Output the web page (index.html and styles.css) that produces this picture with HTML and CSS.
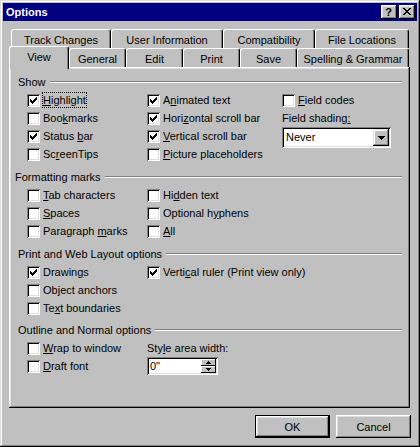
FILE: index.html
```html
<!DOCTYPE html>
<html>
<head>
<meta charset="utf-8">
<title>Options</title>
<link rel="stylesheet" href="styles.css">
</head>
<body>
<div class="window">
  <div class="titlebar">
    <span class="title">Options</span>
    <div class="tb-buttons">
      <div class="tb-btn help">?</div>
      <div class="tb-btn">
        <svg width="8" height="7" viewBox="0 0 8 7"><path fill="#000" d="M0 0h2v1H0zM6 0h2v1H6zM1 1h2v1H1zM5 1h2v1H5zM2 2h4v1H2zM3 3h2v1H3zM2 4h4v1H2zM1 5h2v1H1zM5 5h2v1H5zM0 6h2v1H0zM6 6h2v1H6z"/></svg>
      </div>
    </div>
  </div>

  <div class="dialog">
    <div class="tabs">
      <div class="tabrow">
        <div class="tab t-track">Track Changes</div>
        <div class="tab t-user">User Information</div>
        <div class="tab t-compat">Compatibility</div>
        <div class="tab t-files">File Locations</div>
      </div>
      <div class="tabrow">
        <div class="tab t-view active">View</div>
        <div class="tab t-small">General</div>
        <div class="tab t-small">Edit</div>
        <div class="tab t-small">Print</div>
        <div class="tab t-small">Save</div>
        <div class="tab t-spell">Spelling &amp; Grammar</div>
      </div>
    </div>

    <div class="panel">
      <section class="group">
        <div class="group-head"><span>Show</span><span class="rule"></span></div>
        <div class="grid">
          <label class="cb"><span class="box"><svg width="7" height="7" viewBox="0 0 7 7"><path d="M0 2h1v3H0zM1 3h1v3H1zM2 4h1v3H2zM3 3h1v3H3zM4 2h1v3H4zM5 1h1v3H5zM6 0h1v3H6z"/></svg></span><span class="txt focus"><u>H</u>ighlight</span></label>
          <label class="cb"><span class="box"><svg width="7" height="7" viewBox="0 0 7 7"><path d="M0 2h1v3H0zM1 3h1v3H1zM2 4h1v3H2zM3 3h1v3H3zM4 2h1v3H4zM5 1h1v3H5zM6 0h1v3H6z"/></svg></span><span class="txt">A<u>n</u>imated text</span></label>
          <label class="cb"><span class="box"></span><span class="txt"><u>F</u>ield codes</span></label>

          <label class="cb"><span class="box"></span><span class="txt">Boo<u>k</u>marks</span></label>
          <label class="cb"><span class="box"><svg width="7" height="7" viewBox="0 0 7 7"><path d="M0 2h1v3H0zM1 3h1v3H1zM2 4h1v3H2zM3 3h1v3H3zM4 2h1v3H4zM5 1h1v3H5zM6 0h1v3H6z"/></svg></span><span class="txt">Hori<u>z</u>ontal scroll bar</span></label>
          <span class="txt plain">Field shading<u>:</u></span>

          <label class="cb"><span class="box"><svg width="7" height="7" viewBox="0 0 7 7"><path d="M0 2h1v3H0zM1 3h1v3H1zM2 4h1v3H2zM3 3h1v3H3zM4 2h1v3H4zM5 1h1v3H5zM6 0h1v3H6z"/></svg></span><span class="txt">Status <u>b</u>ar</span></label>
          <label class="cb"><span class="box"><svg width="7" height="7" viewBox="0 0 7 7"><path d="M0 2h1v3H0zM1 3h1v3H1zM2 4h1v3H2zM3 3h1v3H3zM4 2h1v3H4zM5 1h1v3H5zM6 0h1v3H6z"/></svg></span><span class="txt"><u>V</u>ertical scroll bar</span></label>
          <div class="combo">
            <span class="combo-value">Never</span>
            <span class="combo-btn"><svg width="7" height="4" viewBox="0 0 7 4"><path d="M0 0h7v1H0zM1 1h5v1H1zM2 2h3v1H2zM3 3h1v1H3z"/></svg></span>
          </div>

          <label class="cb"><span class="box"></span><span class="txt">Sc<u>r</u>eenTips</span></label>
          <label class="cb"><span class="box"></span><span class="txt"><u>P</u>icture placeholders</span></label>
        </div>
      </section>

      <section class="group">
        <div class="group-head shift"><span>Formatting marks</span><span class="rule"></span></div>
        <div class="grid two">
          <label class="cb c1"><span class="box"></span><span class="txt"><u>T</u>ab characters</span></label>
          <label class="cb c2"><span class="box"></span><span class="txt">Hi<u>d</u>den text</span></label>
          <label class="cb c1"><span class="box"></span><span class="txt"><u>S</u>paces</span></label>
          <label class="cb c2"><span class="box"></span><span class="txt">Optional h<u>y</u>phens</span></label>
          <label class="cb c1"><span class="box"></span><span class="txt">Paragraph <u>m</u>arks</span></label>
          <label class="cb c2"><span class="box"></span><span class="txt"><u>A</u>ll</span></label>
        </div>
      </section>

      <section class="group">
        <div class="group-head"><span>Print and Web Layout options</span><span class="rule"></span></div>
        <div class="grid two">
          <label class="cb c1"><span class="box"><svg width="7" height="7" viewBox="0 0 7 7"><path d="M0 2h1v3H0zM1 3h1v3H1zM2 4h1v3H2zM3 3h1v3H3zM4 2h1v3H4zM5 1h1v3H5zM6 0h1v3H6z"/></svg></span><span class="txt">Drawin<u>g</u>s</span></label>
          <label class="cb c2"><span class="box"><svg width="7" height="7" viewBox="0 0 7 7"><path d="M0 2h1v3H0zM1 3h1v3H1zM2 4h1v3H2zM3 3h1v3H3zM4 2h1v3H4zM5 1h1v3H5zM6 0h1v3H6z"/></svg></span><span class="txt">Verti<u>c</u>al ruler (Print view only)</span></label>
          <label class="cb c1"><span class="box"></span><span class="txt">Ob<u>j</u>ect anchors</span></label>
          <label class="cb c1"><span class="box"></span><span class="txt">Te<u>x</u>t boundaries</span></label>
        </div>
      </section>

      <section class="group last">
        <div class="group-head"><span>Outline and Normal options</span><span class="rule"></span></div>
        <div class="grid two">
          <label class="cb c1"><span class="box"></span><span class="txt"><u>W</u>rap to window</span></label>
          <span class="txt plain c2">Sty<u>l</u>e area width:</span>
          <label class="cb c1"><span class="box"></span><span class="txt"><u>D</u>raft font</span></label>
          <div class="spin c2">
            <span class="spin-value">0"</span>
            <span class="spin-btns">
              <span class="spin-btn"><svg width="5" height="3" viewBox="0 0 5 3"><path d="M2 0h1v1H2zM1 1h3v1H1zM0 2h5v1H0z"/></svg></span>
              <span class="spin-btn"><svg width="5" height="3" viewBox="0 0 5 3"><path d="M0 0h5v1H0zM1 1h3v1H1zM2 2h1v1H2z"/></svg></span>
            </span>
          </div>
        </div>
      </section>
    </div>

    <div class="actions">
      <div class="btn default">OK</div>
      <div class="btn">Cancel</div>
    </div>
  </div>
</div>
</body>
</html>
```
FILE: styles.css
```css
* { box-sizing: border-box; }

html, body {
  margin: 0;
  padding: 0;
}

body {
  width: 420px;
  height: 447px;
  background: #c0c0c0;
  font-family: "Liberation Sans", Arial, sans-serif;
  font-size: 11px;
  color: #000;
}

.window {
  width: 420px;
  height: 447px;
  padding: 3px;
  background: #c0c0c0;
  box-shadow: inset -1px -1px #000, inset 1px 1px #dfdfdf, inset -2px -2px #808080, inset 2px 2px #fff;
  display: flex;
  flex-direction: column;
}

/* title bar */
.titlebar {
  height: 18px;
  flex: none;
  background: #000080;
  display: flex;
  align-items: center;
  justify-content: space-between;
  padding: 0 2px 0 3px;
}

.title {
  color: #fff;
  font-weight: bold;
  font-size: 11px;
  line-height: 14px;
}

.tb-buttons {
  display: flex;
  gap: 2px;
}

.tb-btn {
  width: 16px;
  height: 14px;
  background: #c0c0c0;
  box-shadow: inset -1px -1px #000, inset 1px 1px #fff, inset -2px -2px #808080, inset 2px 2px #dfdfdf;
  display: flex;
  align-items: center;
  justify-content: center;
  padding: 0 1px 1px 0;
}

.tb-btn.help {
  font-weight: bold;
  font-size: 11px;
  line-height: 12px;
}

/* dialog body */
.dialog {
  flex: 1;
  padding: 8px 6px 0;
  display: flex;
  flex-direction: column;
}

.tabs {
  margin-left: 2px;
  width: 398px;
}

.tabrow {
  display: flex;
  height: 19px;
}

.tab {
  height: 19px;
  flex: none;
  background: #c0c0c0;
  border: 1px solid #fff;
  border-bottom: none;
  border-right-color: #000;
  border-radius: 3px 3px 0 0;
  box-shadow: inset -1px 0 #808080;
  text-align: center;
  padding-top: 3px;
  line-height: 14px;
  white-space: nowrap;
}

.t-track { width: 100px; }
.t-user { width: 112px; }
.t-compat { width: 92px; }
.t-files { width: 94px; }
.t-small { width: 57px; }
.t-spell { width: 112px; }

.t-view { width: 58px; }

.tab.active {
  position: relative;
  z-index: 1;
  width: 60px;
  height: 23px;
  margin: -2px 0 -2px -2px;
}

/* tab page */
.panel {
  width: 401px;
  height: 341px;
  flex: none;
  padding: 8px 8px 0 9px;
  box-shadow: inset -1px -1px #000, inset 1px 1px #fff, inset -2px -2px #808080, inset 2px 2px #dfdfdf;
}

.group + .group { margin-top: 6px; }
.group.last { margin-top: 5px; }

.group-head {
  display: flex;
  align-items: center;
  height: 14px;
  line-height: 14px;
  white-space: nowrap;
}

.group-head.shift { margin-left: -3px; }

.rule {
  flex: 1;
  height: 2px;
  border-top: 1px solid #808080;
  border-bottom: 1px solid #fff;
  margin-left: 4px;
}

.grid {
  display: grid;
  grid-template-columns: 120px 135px 1fr;
  grid-auto-rows: 18px;
  margin: 3px 0 0 9px;
}

.grid.two { grid-template-columns: 120px 1fr; }

.c1 { grid-column: 1; }
.c2 { grid-column: 2; }

.cb {
  display: flex;
  align-items: flex-start;
  gap: 3px;
  white-space: nowrap;
}

.box {
  flex: none;
  width: 13px;
  height: 13px;
  margin-top: 2px;
  background: #fff;
  box-shadow: inset 1px 1px #808080, inset -1px -1px #fff, inset 2px 2px #000, inset -2px -2px #dfdfdf;
  display: flex;
  align-items: center;
  justify-content: center;
}

.box svg { display: block; fill: #000; }

.txt {
  line-height: 14px;
  margin-top: 1px;
  white-space: nowrap;
}

.txt.plain { align-self: start; }

.focus { outline: 1px dotted #000; }

u { text-underline-offset: 1px; }

/* combo box */
.combo {
  grid-row: span 2;
  width: 109px;
  height: 21px;
  margin-top: -1px;
  padding: 2px;
  display: flex;
  background: #fff;
  box-shadow: inset 1px 1px #808080, inset -1px -1px #fff, inset 2px 2px #000, inset -2px -2px #dfdfdf;
}

.combo-value {
  flex: 1;
  padding-left: 2px;
  line-height: 17px;
}

.combo-btn {
  width: 16px;
  height: 17px;
  background: #c0c0c0;
  box-shadow: inset -1px -1px #000, inset 1px 1px #dfdfdf, inset -2px -2px #808080, inset 2px 2px #fff;
  display: flex;
  align-items: center;
  justify-content: center;
}

.combo-btn svg { display: block; fill: #000; }

/* spinner */
.spin {
  width: 71px;
  height: 18px;
  margin-top: -1px;
  padding: 2px;
  display: flex;
  background: #fff;
  box-shadow: inset 1px 1px #808080, inset -1px -1px #fff, inset 2px 2px #000, inset -2px -2px #dfdfdf;
}

.spin-value {
  flex: 1;
  padding-left: 1px;
  line-height: 14px;
}

.spin-btns {
  width: 15px;
  display: flex;
  flex-direction: column;
}

.spin-btn {
  flex: 1;
  background: #c0c0c0;
  box-shadow: inset -1px -1px #000, inset 1px 1px #fff;
  display: flex;
  align-items: center;
  justify-content: center;
}

.spin-btn svg { display: block; fill: #000; }

/* buttons */
.actions {
  display: flex;
  justify-content: flex-end;
  gap: 6px;
  margin-top: 7px;
}

.btn {
  width: 75px;
  height: 23px;
  background: #c0c0c0;
  box-shadow: inset -1px -1px #000, inset 1px 1px #fff, inset -2px -2px #808080, inset 2px 2px #dfdfdf;
  display: flex;
  align-items: center;
  justify-content: center;
  line-height: 14px;
}

.btn.default {
  box-shadow: inset 0 0 0 1px #000, inset -2px -2px #000, inset 2px 2px #fff, inset -3px -3px #808080, inset 3px 3px #dfdfdf;
}
```
